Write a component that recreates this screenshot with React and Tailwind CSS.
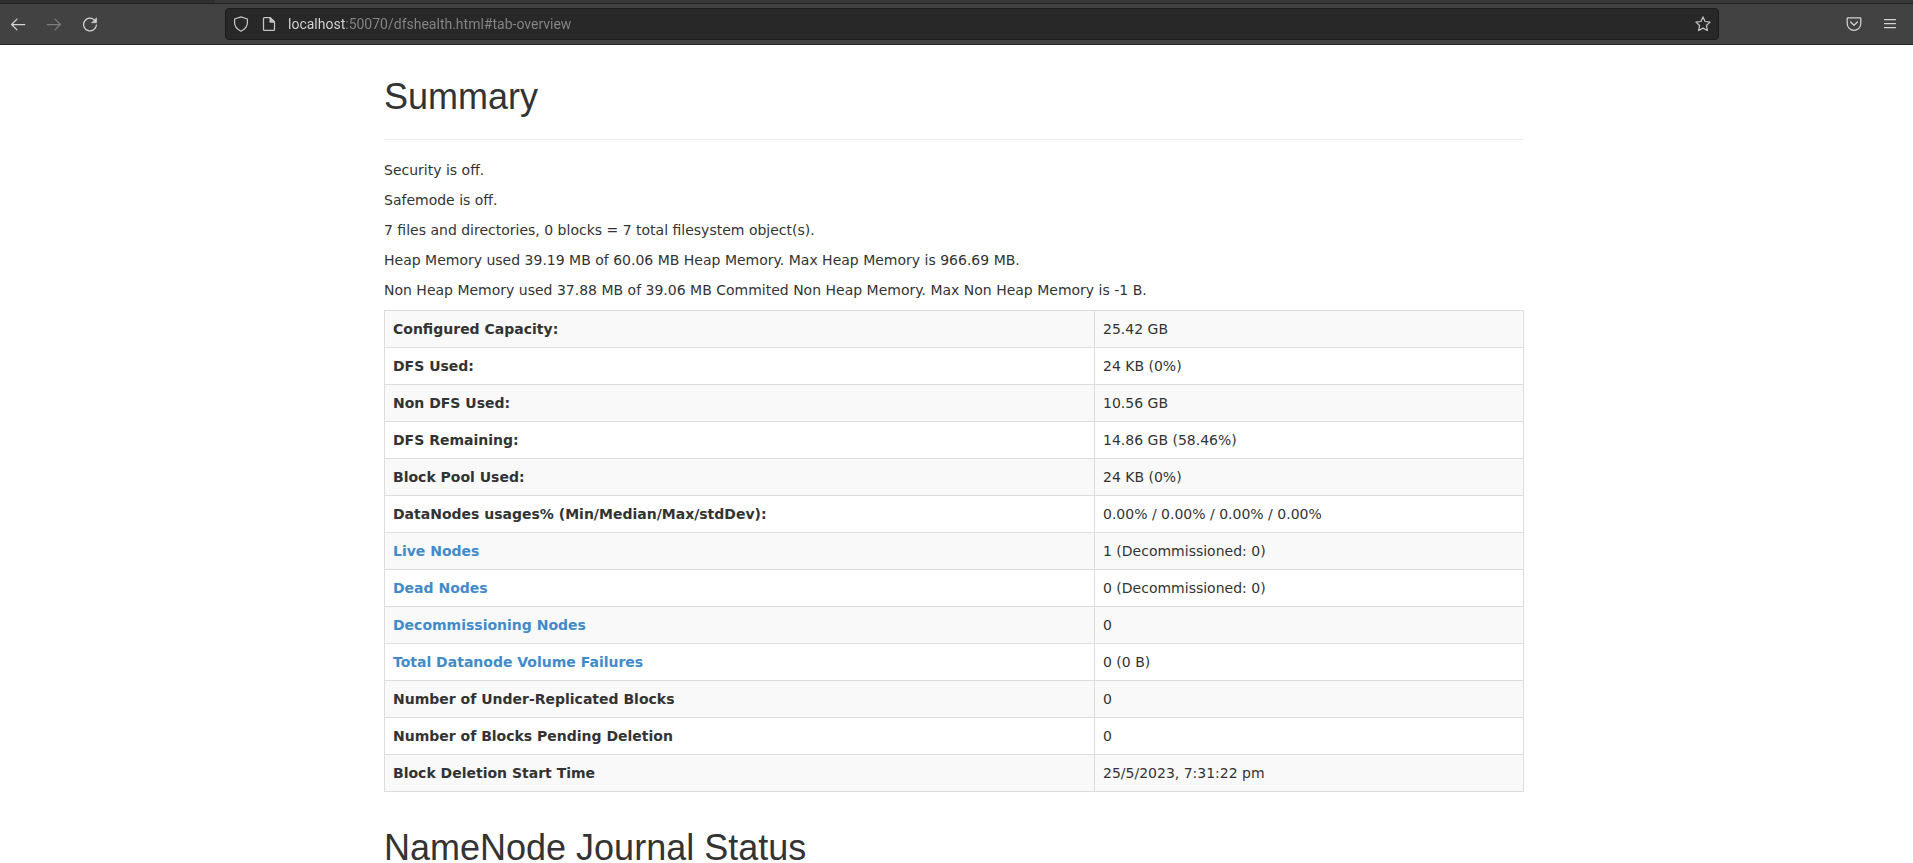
import React from "react";

const paragraphs = [
  "Security is off.",
  "Safemode is off.",
  "7 files and directories, 0 blocks = 7 total filesystem object(s).",
  "Heap Memory used 39.19 MB of 60.06 MB Heap Memory. Max Heap Memory is 966.69 MB.",
  "Non Heap Memory used 37.88 MB of 39.06 MB Commited Non Heap Memory. Max Non Heap Memory is -1 B.",
];

const rows = [
  { label: "Configured Capacity:", value: "25.42 GB" },
  { label: "DFS Used:", value: "24 KB (0%)" },
  { label: "Non DFS Used:", value: "10.56 GB" },
  { label: "DFS Remaining:", value: "14.86 GB (58.46%)" },
  { label: "Block Pool Used:", value: "24 KB (0%)" },
  { label: "DataNodes usages% (Min/Median/Max/stdDev):", value: "0.00% / 0.00% / 0.00% / 0.00%" },
  { label: "Live Nodes", value: "1 (Decommissioned: 0)", href: "#tab-datanode" },
  { label: "Dead Nodes", value: "0 (Decommissioned: 0)", href: "#tab-datanode" },
  { label: "Decommissioning Nodes", value: "0", href: "#tab-datanode" },
  { label: "Total Datanode Volume Failures", value: "0 (0 B)", href: "#tab-datanode-volume-failures" },
  { label: "Number of Under-Replicated Blocks", value: "0" },
  { label: "Number of Blocks Pending Deletion", value: "0" },
  { label: "Block Deletion Start Time", value: "25/5/2023, 7:31:22 pm" },
];

function Icon({ children }) {
  return (
    <svg
      viewBox="0 0 16 16"
      className="size-4"
      fill="none"
      stroke="currentColor"
      strokeWidth="1.25"
      strokeLinecap="round"
      strokeLinejoin="round"
      aria-hidden="true"
    >
      {children}
    </svg>
  );
}

function ToolButton({ label, disabled, children }) {
  return (
    <button
      type="button"
      aria-label={label}
      disabled={disabled}
      className="flex size-9 items-center justify-center text-[#d4d4d4] disabled:text-[#7c7c7c]"
    >
      {children}
    </button>
  );
}

function Toolbar() {
  return (
    <header className="shrink-0 border-b border-[#262626] bg-[#424242]">
      <div className="h-1 border-b border-[#232323] bg-[#383838]">
        <div className="h-full w-[215px] bg-[#303030]" />
      </div>
      <div className="flex h-10 items-center">
        <nav className="flex w-[225px] shrink-0 items-center" aria-label="History">
          <ToolButton label="Back">
            <Icon>
              <path d="M14.8 8.5H1.6M7 3.1 1.6 8.5 7 13.900" />
            </Icon>
          </ToolButton>
          <ToolButton label="Forward" disabled>
            <Icon>
              <path d="M1.2 8.5h13.2M9 3.1l5.400 5.400L9 13.900" />
            </Icon>
          </ToolButton>
          <ToolButton label="Reload">
            <Icon>
              <path d="M14.4 9A6.4 6.4 0 1 1 12.4 3.9" />
              <path d="M14.6 2v4.8H9.8z" fill="currentColor" strokeWidth="0.5" />
            </Icon>
          </ToolButton>
        </nav>
        <div className="flex h-8 min-w-0 flex-1 items-center rounded border border-[#1c1c1c] bg-[#282828] text-[#c4c4c4]">
          <button type="button" aria-label="Tracking protection" className="flex w-[30px] shrink-0 justify-center">
            <Icon>
              <path d="M8 .9 14.4 3v3.8c0 3.6-2.2 6.4-6.4 8.4-4.2-2-6.4-4.8-6.4-8.4V3z" />
            </Icon>
          </button>
          <button type="button" aria-label="Site information" className="flex w-[26px] shrink-0 justify-center">
            <Icon>
              <path d="M3.5 1.6h5.6L13.5 6v7.4a1 1 0 0 1-1 1h-9a1 1 0 0 1-1-1V2.6a1 1 0 0 1 1-1z" />
              <path d="M9.1 1.6V6h4.4z" fill="currentColor" />
            </Icon>
          </button>
          <input
            type="text"
            aria-label="Address"
            defaultValue="localhost:50070/dfshealth.html#tab-overview"
            className="ml-1.5 min-w-0 flex-1 bg-[linear-gradient(to_right,#d8d8d8_58px,#858585_58px)] bg-clip-text font-[Roboto,sans-serif] text-sm text-transparent outline-none"
          />
          <button type="button" aria-label="Bookmark this page" className="flex w-[30px] shrink-0 justify-center">
            <Icon>
              <path d="m8 .9 2.1 4.6 5 .6-3.7 3.4 1 5L8 12.1l-4.4 2.4 1-5L.9 6.1l5-.6z" />
            </Icon>
          </button>
        </div>
        <div className="flex w-[194px] shrink-0 items-center justify-end pr-[5px]">
          <ToolButton label="Save to Pocket">
            <Icon>
              <path d="M2 1.8h12a.8.8 0 0 1 .8.8v5a6.8 6.8 0 0 1-13.6 0v-5a.8.8 0 0 1 .8-.8z" />
              <path d="M4.6 6 8 9.2 11.4 6" />
            </Icon>
          </ToolButton>
          <ToolButton label="Open application menu">
            <Icon>
              <path d="M2.5 3.5h11M2.5 7.5h11M2.5 11.5h11" />
            </Icon>
          </ToolButton>
        </div>
      </div>
    </header>
  );
}

function Heading({ children }) {
  return (
    <div className="border-b border-[#eeeeee] pb-6">
      <h1 className="font-['Liberation_Sans',Arial,sans-serif] text-4xl leading-9 font-medium">{children}</h1>
    </div>
  );
}

export default function App() {
  return (
    <div className="flex h-screen flex-col bg-white">
      <Toolbar />
      <main className="min-h-0 flex-1 overflow-hidden pr-[5px] font-['DejaVu_Sans',sans-serif] text-sm leading-5 text-[#333333]">
        <div className="mx-auto max-w-[1170px] px-[15px] pt-[34px]">
          <section>
            <Heading>Summary</Heading>
            <div className="flex flex-col gap-2.5 pt-5 pb-2.5">
              {paragraphs.map((text) => (
                <p key={text}>{text}</p>
              ))}
            </div>
            <table className="w-full border-collapse border border-[#dddddd]">
              <tbody>
                {rows.map((row) => (
                  <tr key={row.label} className="odd:bg-[#f9f9f9]">
                    <th scope="row" className="w-[710px] border border-[#dddddd] p-2 text-left font-bold">
                      {row.href ? (
                        <a href={row.href} className="text-[#428bca]">
                          {row.label}
                        </a>
                      ) : (
                        row.label
                      )}
                    </th>
                    <td className="border border-[#dddddd] p-2">{row.value}</td>
                  </tr>
                ))}
              </tbody>
            </table>
          </section>
          <section className="pt-[38px]">
            <Heading>NameNode Journal Status</Heading>
          </section>
        </div>
      </main>
    </div>
  );
}
